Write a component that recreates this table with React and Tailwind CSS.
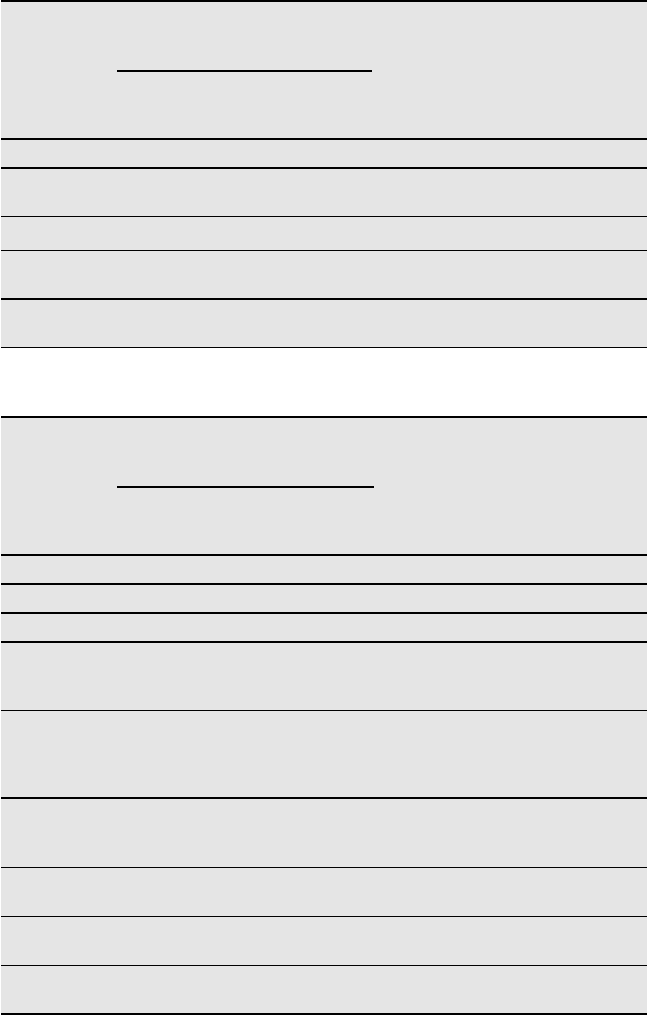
import React from "react";

// Row heights include the bottom rule, so the grey cell is height minus border.
const firstTable = [
  "h-[29px] border-b-2",
  "h-[48px] border-b",
  "h-[34px] border-b",
  "h-[49px] border-b-2",
  "h-[48px] border-b",
];

const secondTable = [
  "h-[29px] border-b-2",
  "h-[29px] border-b-2",
  "h-[29px] border-b-2",
  "h-[68px] border-b",
  "h-[88px] border-b-2",
  "h-[69px] border-b",
  "h-[49px] border-b",
  "h-[49px] border-b",
  "h-[49px] border-b-2",
];

const HeaderRow = ({ lineWidth }) => (
  <div className="h-[138px] border-b-2 border-black bg-[#e5e5e5] pt-[68px] pl-[116px]">
    <div className={`${lineWidth} h-[1.5px] bg-black`} />
  </div>
);

const Table = ({ rows, lineWidth }) => (
  <div className="border-t-2 border-black">
    <HeaderRow lineWidth={lineWidth} />
    {rows.map((cls, i) => (
      <div key={i} className={`${cls} border-black bg-[#e5e5e5]`} />
    ))}
  </div>
);

export default function App() {
  return (
    <div className="min-h-[1015px] bg-white px-px font-['Liberation_Sans',sans-serif]">
      <Table rows={firstTable} lineWidth="w-[255px]" />
      <div className="h-[68px]" />
      <Table rows={secondTable} lineWidth="w-[257px]" />
    </div>
  );
}
